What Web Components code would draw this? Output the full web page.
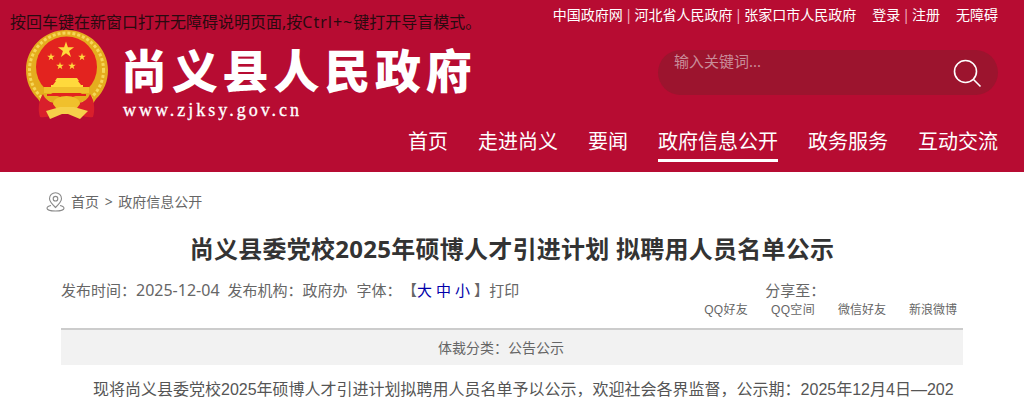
<!DOCTYPE html>
<html lang="zh-CN">
<head>
<meta charset="utf-8">
<title>尚义县委党校2025年硕博人才引进计划 拟聘用人员名单公示</title>
<style>
  html, body { margin: 0; padding: 0; height: 400px; overflow: hidden; background: #fff; }
  body { font-family: "Noto Sans", "Noto Sans CJK SC", sans-serif; }
</style>
</head>
<body>
<gov-header>
  <a slot="links">中国政府网</a><a slot="links">河北省人民政府</a><a slot="links">张家口市人民政府</a>
  <a slot="nav">首页</a><a slot="nav">走进尚义</a><a slot="nav">要闻</a><a slot="nav" class="on">政府信息公开</a><a slot="nav">政务服务</a><a slot="nav">互动交流</a>
</gov-header>
<bread-crumb>首页 &gt; 政府信息公开</bread-crumb>
<article-view></article-view>

<script>
class GovHeader extends HTMLElement {
  connectedCallback() {
    this.attachShadow({ mode: 'open' });
    this.shadowRoot.innerHTML = `
      <style>
        :host { position: relative; height: 172px; background: #b70c32; color: #fff; box-sizing: border-box; padding: 0 26px; display: flex; }
        .tip { position: absolute; left: 10px; top: 11px; font-size: 16px; line-height: 22px; color: #2a0a10; white-space: nowrap; }
        .tip span { letter-spacing: 1px; }
        .brand { flex: 1; min-width: 0; display: flex; align-items: flex-start; gap: 13px; padding-top: 29px; }
        .brand svg { display: block; flex: none; width: 84px; height: 92px; }
        .name { font: 900 46px/52px "Noto Sans CJK SC", sans-serif; letter-spacing: 4.800px; margin-top: 13px; margin-left: -2px; white-space: nowrap; }
        .url { font: 400 18px/20px "Liberation Serif", serif; letter-spacing: 3px; margin-top: 6px; -webkit-text-stroke: .3px #fff; white-space: nowrap; }
        .right { flex: none; display: flex; flex-direction: column; align-items: flex-end; }
        .links { display: flex; align-items: center; font-size: 14px; line-height: 20px; padding-top: 5px; white-space: nowrap; }
        .links .sep { margin: 0 2px; color: #f3b5c2; }
        .links .gap { margin-left: 16px; }
        ::slotted(a[slot="links"]) { color: #fff; }
        ::slotted(a[slot="links"]:not(:first-child))::before { content: "|"; margin: 0 2px; color: #f3b5c2; }
        .search { box-sizing: border-box; width: 340px; height: 45px; margin-top: 25px; border-radius: 23px; background: #9c142e; display: flex; justify-content: space-between; padding: 0 16px; }
        .search span { font-size: 15px; line-height: 22px; color: #c98c99; }
        .search svg { display: block; width: 30px; height: 30px; margin-top: 8px; }
        nav { display: flex; gap: 30px; margin-top: 30px; font-size: 20px; line-height: 34px; white-space: nowrap; }
        ::slotted(a[slot="nav"]) { display: block; height: 37px; color: #fff; box-sizing: border-box; }
        ::slotted(a.on) { border-bottom: 3px solid #fff; }
      </style>
      <div class="tip">按回车键在新窗口打开无障碍说明页面,按<span>Ctrl+~</span>键打开导盲模式。</div>
      <div class="brand">
        <svg viewBox="1 0 84 92">
          <defs><path id="star" d="M0-1L.225-.309H.951L.363.118.588.809 0 .382-.588.809-.363.118-.951-.309H-.225z"/></defs>
          <path d="M41.500 1C18.500 1 1 19.500 1 41c0 11 4 21 12 29l4 6h50l4-6c8-8 12-18 12-29C83 19.500 64.500 1 41.500 1z" fill="#e5ad1e"/>
          <circle cx="41.500" cy="41" r="37" fill="none" stroke="#f6d658" stroke-width="3" stroke-dasharray="3 2"/>
          <circle cx="41.500" cy="38" r="30.500" fill="#e3231f"/>
          <g fill="#ffd93c">
            <use href="#star" transform="translate(41 21) scale(8.500)"/>
            <use href="#star" transform="translate(26 28) scale(4)"/>
            <use href="#star" transform="translate(57 28) scale(4)"/>
            <use href="#star" transform="translate(35 37) scale(4)"/>
            <use href="#star" transform="translate(47 37) scale(4)"/>
            <path d="M32 49h20l2 3h-1l3 4h2v2H26v-2h2l3-4h-1z"/>
          </g>
          <path d="M19 58h45v6H19z" fill="#f0c02c"/>
          <path d="M22 65h39v2H22z" fill="#e3231f"/>
          <path d="M18 65C13 72 13 82 15 88c8 1 14-2 19-7l-5-7c-5-1-9-4-11-9zM65 65c5 7 5 17 3 23-8 1-14-2-19-7l5-7c5-1 9-4 11-9z" fill="#d91f2b"/>
          <path d="M28 75a13.500 8 0 0 1 27 0l-3 4H31z" fill="#f0c02c"/>
          <path d="M21 82l14-4h14l14 4-8 8-12-5h-6l-12 5z" fill="#f6d04a"/>
        </svg>
        <div>
          <div class="name">尚义县人民政府</div>
          <div class="url">www.zjksy.gov.cn</div>
        </div>
      </div>
      <div class="right">
        <div class="links">
          <slot name="links"></slot>
          <a class="gap">登录</a><span class="sep">|</span><a>注册</a><a class="gap">无障碍</a>
        </div>
        <div class="search">
          <span>输入关键词...</span>
          <svg viewBox="0 0 30 30" fill="none" stroke="#fff" stroke-width="1.600"><circle cx="13.500" cy="13.500" r="11"/><path d="M21.500 21.500l7 7"/></svg>
        </div>
        <nav><slot name="nav"></slot></nav>
      </div>
    `;
  }
}

class BreadCrumb extends HTMLElement {
  connectedCallback() {
    this.attachShadow({ mode: 'open' });
    this.shadowRoot.innerHTML = `
      <style>
        :host { display: flex; align-items: center; gap: 6px; height: 20px; margin-top: 20px; padding-left: 46px; font-size: 14px; line-height: 20px; color: #666; word-spacing: 2px; }
        svg { display: block; width: 19px; height: 20px; }
      </style>
      <svg viewBox="0 0 19 20" fill="none" stroke="#8a8a8a" stroke-width="1.100">
        <path d="M9.500 15.500C6.500 12.500 3.500 9.500 3.500 6.700a6 6 0 0 1 12 0c0 2.800-3 5.800-6 8.800z"/>
        <circle cx="9.500" cy="6.700" r="2.300"/>
        <path d="M5 13.500c-2.500.6-4 1.700-4 2.700 0 1.500 3.800 2.800 8.500 2.800s8.500-1.300 8.500-2.800c0-1-1.500-2.100-4-2.700"/>
      </svg>
      <span><slot></slot></span>
    `;
  }
}

class ArticleView extends HTMLElement {
  connectedCallback() {
    this.attachShadow({ mode: 'open' });
    this.shadowRoot.innerHTML = `
      <style>
        :host { display: block; margin: 0 61px; color: #666; }
        h1 { margin: 21px 0 0; font-size: 24px; font-weight: 700; line-height: 32px; letter-spacing: .25px; color: #333; text-align: center; }
        .meta { display: flex; justify-content: space-between; margin-top: 13px; height: 50px; font-size: 15px; }
        .info { display: flex; gap: 9px; line-height: 24px; white-space: nowrap; }
        .info em { font-style: normal; font-size: 16px; margin-right: -1px; }
        .info b { font-weight: 400; color: #00a; letter-spacing: 4px; }
        .info .size { margin-left: 8px; }
        .share { display: flex; flex-direction: column; margin-right: 6px; }
        .share .t { line-height: 24px; margin-left: 61px; }
        .items { display: flex; gap: 23px; font: 12px/16px "Liberation Sans", "Noto Sans CJK SC", sans-serif; white-space: nowrap; }
        .items .q { letter-spacing: .3px; }
        .type { height: 35px; border-top: 2px solid #ccc; background: #f2f2f2; text-align: center; font-size: 14px; line-height: 35px; padding-right: 22px; }
        p { margin: 11px 0 0; padding-right: 2px; text-indent: 32px; word-break: break-all; font: 16px/28px "Liberation Sans", "Noto Sans CJK SC", sans-serif; color: #555; }
      </style>
      <h1>尚义县委党校2025年硕博人才引进计划 拟聘用人员名单公示</h1>
      <div class="meta">
        <div class="info">
          <span>发布时间：<em>2025-12-04</em></span>
          <span>发布机构：政府办</span>
          <span>字体：<span class="size">【<b>大中小</b>】</span>打印</span>
        </div>
        <div class="share">
          <div class="t">分享至：</div>
          <div class="items"><span class="q">QQ好友</span><span class="q">QQ空间</span><span>微信好友</span><span>新浪微博</span></div>
        </div>
      </div>
      <div class="type">体裁分类：公告公示</div>
      <p>现将尚义县委党校2025年硕博人才引进计划拟聘用人员名单予以公示，欢迎社会各界监督，公示期：2025年12月4日—2025年12月10日。</p>
    `;
  }
}

customElements.define('gov-header', GovHeader);
customElements.define('bread-crumb', BreadCrumb);
customElements.define('article-view', ArticleView);
</script>
</body>
</html>
